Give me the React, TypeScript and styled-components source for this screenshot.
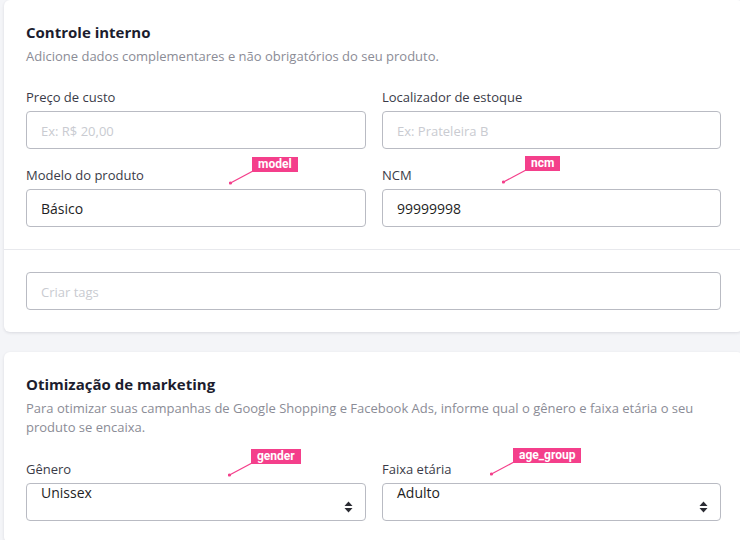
import styled, { createGlobalStyle } from "styled-components";

const GlobalStyle = createGlobalStyle`
  html, body {
    margin: 0;
    padding: 0;
    background: #f4f5f8;
    overflow: hidden;
  }
  body {
    font-family: "Open Sans", "Noto Sans", sans-serif;
  }
`;

const Page = styled.div`
  width: 760px;
  padding: 0 0 0 4px;
  display: flex;
  flex-direction: column;
  gap: 20px;
`;

const Card = styled.section`
  background: #ffffff;
  border-radius: 6px;
  box-shadow: 0 1px 3px rgba(30, 35, 60, 0.12);
  width: 739px;
`;

const CardBody = styled.div`
  padding: 22px;
`;

const Title = styled.h2`
  margin: 0;
  font-size: 15px;
  font-weight: 700;
  color: #1c1d2e;
  line-height: 20px;
`;

const Subtitle = styled.p`
  margin: 5px 0 0;
  font-size: 13px;
  color: #8b8c96;
  line-height: 19px;
`;

const Grid = styled.div<{ $top?: number }>`
  display: grid;
  grid-template-columns: 340px 339px;
  column-gap: 16px;
  row-gap: 16px;
  margin-top: ${(p) => p.$top ?? 0}px;
`;

const Field = styled.div`
  position: relative;
  display: flex;
  flex-direction: column;
  gap: 4px;
`;

const Label = styled.label`
  font-size: 13px;
  color: #3a3b48;
  line-height: 20px;
`;

const Input = styled.input`
  box-sizing: border-box;
  width: 100%;
  height: 38px;
  border: 1px solid #b9bbc3;
  border-radius: 4px;
  padding: 0 14px;
  font-family: inherit;
  font-size: 14px;
  color: #1e1e24;
  background: #fff;
  outline: none;

  &::placeholder {
    color: #c9cbd1;
    font-size: 13px;
  }
`;

const Divider = styled.hr`
  margin: 0;
  border: none;
  border-top: 1px solid #e8e9ed;
`;

const SelectBox = styled.div`
  box-sizing: border-box;
  height: 38px;
  border: 1px solid #b9bbc3;
  border-radius: 4px;
  padding: 0 12px 0 14px;
  display: flex;
  justify-content: space-between;
  font-size: 14px;
  color: #1e1e24;
  background: #fff;
`;

const SelectValue = styled.span`
  line-height: 18px;
`;

const SelectArrows = styled.svg`
  align-self: center;
  margin-top: 10px;
`;

const Annotation = styled.div<{ $x: number; $y: number }>`
  position: absolute;
  left: ${(p) => p.$x}px;
  top: ${(p) => p.$y}px;
  width: 120px;
  height: 30px;
  pointer-events: none;
`;

const Tag = styled.span`
  position: absolute;
  left: 23px;
  top: 0;
  height: 15px;
  padding: 0 6px;
  background: #f43f8b;
  color: #fff;
  font-family: Roboto, "Liberation Sans", sans-serif;
  font-weight: 700;
  font-size: 12px;
  line-height: 15px;
  white-space: nowrap;
`;

function Pointer({ x, y, name }: { x: number; y: number; name: string }) {
  return (
    <Annotation $x={x} $y={y}>
      <svg width="30" height="30" style={{ position: "absolute", left: 0, top: 0 }}>
        <line x1="24" y1="14" x2="1.5" y2="26" stroke="#f43f8b" strokeWidth="1.2" />
        <circle cx="1.5" cy="26" r="1.6" fill="#f43f8b" />
      </svg>
      <Tag>{name}</Tag>
    </Annotation>
  );
}

function Select({ value }: { value: string }) {
  return (
    <SelectBox>
      <SelectValue>{value}</SelectValue>
      <SelectArrows width="9" height="12" viewBox="0 0 9 12">
        <path d="M4.5 0.5 L8.5 5 H0.5 Z" fill="#2b2c33" />
        <path d="M4.5 11.5 L8.5 7 H0.5 Z" fill="#2b2c33" />
      </SelectArrows>
    </SelectBox>
  );
}

export default function App() {
  return (
    <>
      <GlobalStyle />
      <Page>
        <Card>
          <CardBody>
            <Title>Controle interno</Title>
            <Subtitle>Adicione dados complementares e não obrigatórios do seu produto.</Subtitle>
            <Grid $top={21}>
              <Field>
                <Label>Preço de custo</Label>
                <Input placeholder="Ex: R$ 20,00" />
              </Field>
              <Field>
                <Label>Localizador de estoque</Label>
                <Input placeholder="Ex: Prateleira B" />
              </Field>
              <Field>
                <Label>Modelo do produto</Label>
                <Input defaultValue="Básico" />
                <Pointer x={203} y={-8} name="model" />
              </Field>
              <Field>
                <Label>NCM</Label>
                <Input defaultValue="99999998" />
                <Pointer x={120} y={-9} name="ncm" />
              </Field>
            </Grid>
          </CardBody>
          <Divider />
          <CardBody>
            <Input placeholder="Criar tags" />
          </CardBody>
        </Card>
        <Card>
          <CardBody>
            <Title>Otimização de marketing</Title>
            <Subtitle>
              Para otimizar suas campanhas de Google Shopping e Facebook Ads, informe qual o gênero e faixa etária o seu produto se encaixa.
            </Subtitle>
            <Grid $top={22}>
              <Field>
                <Label>Gênero</Label>
                <Select value="Unissex" />
                <Pointer x={202} y={-10} name="gender" />
              </Field>
              <Field>
                <Label>Faixa etária</Label>
                <Select value="Adulto" />
                <Pointer x={108} y={-11} name="age_group" />
              </Field>
            </Grid>
          </CardBody>
        </Card>
      </Page>
    </>
  );
}
